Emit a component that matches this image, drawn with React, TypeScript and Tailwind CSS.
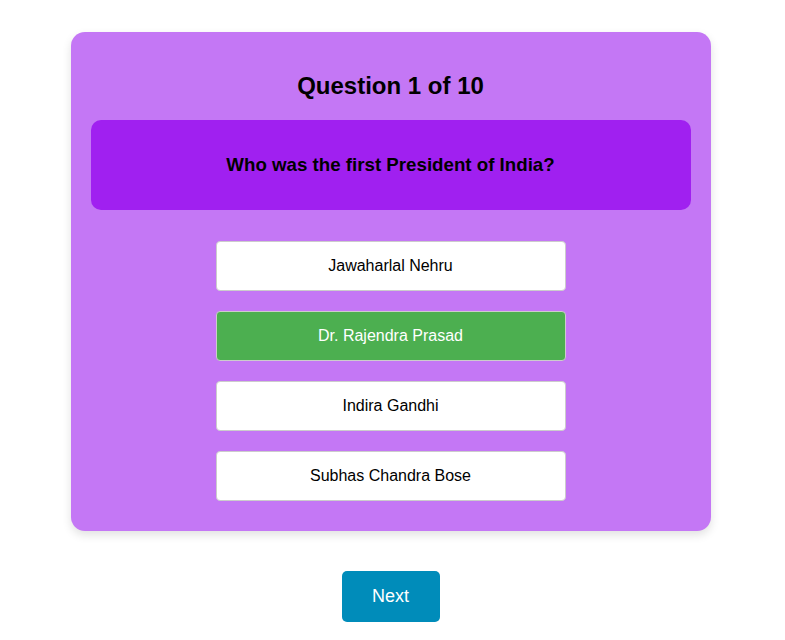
import React from "react";

export default function App() {
  const options = ["Jawaharlal Nehru", "Dr. Rajendra Prasad", "Indira Gandhi", "Subhas Chandra Bose"];
  return (
    <div className="min-h-screen bg-white" style={{ fontFamily: '"Liberation Sans", Arial, sans-serif' }}>
      <div className="w-[781px] flex flex-col items-center pt-[32px]">
        <div className="w-[640px] h-[499px] rounded-[14px] bg-[#c477f5] shadow-[0_4px_10px_rgba(0,0,0,0.12)] px-5 pt-[40px] flex flex-col items-center">
          <h2 className="text-[24px] leading-[28px] font-bold text-black">Question 1 of 10</h2>
          <div className="mt-[20px] w-[600px] h-[90px] rounded-[10px] bg-[#a020f0] flex items-center justify-center">
            <p className="text-[18.72px] font-bold text-black">Who was the first President of India?</p>
          </div>
          <div className="mt-[31px] flex flex-col gap-[20px]">
            {options.map((o, i) => (
              <button
                key={o}
                className={
                  i === 1
                    ? "w-[350px] h-[50px] rounded-[4px] border border-[#cccccc] bg-[#4caf50] text-white text-[16px]"
                    : "w-[350px] h-[50px] rounded-[4px] border border-[#cccccc] bg-white text-black text-[16px]"
                }
              >
                {o}
              </button>
            ))}
          </div>
        </div>
        <button className="mt-[40px] w-[98px] h-[51px] rounded-[5px] bg-[#008cba] text-white text-[18px]">Next</button>
      </div>
    </div>
  );
}
